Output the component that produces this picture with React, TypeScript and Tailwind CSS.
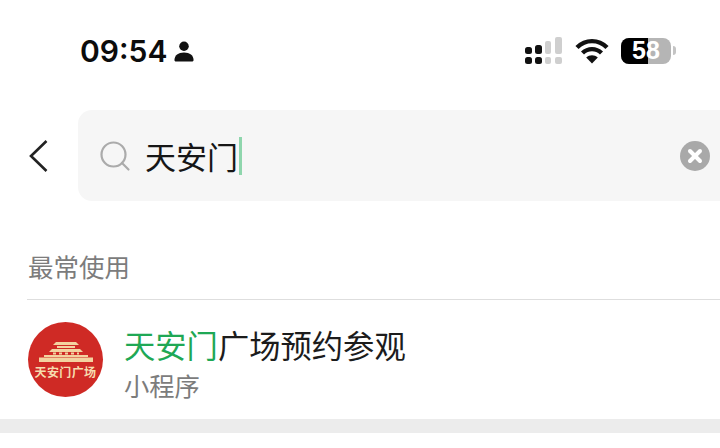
import React from 'react';
import { Search, X } from 'lucide-react';

const cjk = { fontFamily: '"Noto Sans CJK SC", sans-serif' };

const SignalBars = () => (
  <svg width="39" height="27" viewBox="0 0 39 27">
    <rect x="1" y="10" width="7" height="7" rx="2.500" fill="#111" />
    <rect x="11" y="8" width="7" height="9" rx="2.500" fill="#111" />
    <rect x="21" y="4" width="6" height="13" rx="2" fill="#cfcfcf" />
    <rect x="31" y="0" width="7" height="17" rx="2" fill="#cfcfcf" />
    <rect x="1" y="20" width="7" height="7" rx="2.500" fill="#111" />
    <rect x="11" y="20" width="7" height="7" rx="2.500" fill="#111" />
    <rect x="21" y="20" width="6" height="7" rx="2" fill="#cfcfcf" />
    <rect x="31" y="20" width="7" height="7" rx="2" fill="#cfcfcf" />
  </svg>
);

const Wifi = () => (
  <svg width="34" height="26" viewBox="0 0 34 26" fill="none" stroke="#111" strokeWidth="4.400">
    <path d="M2 9.500C10.500 1 23.500 1 32 9.500" />
    <path d="M7.500 15C13 9.800 21 9.800 26.500 15" />
    <path d="M17 25.500L11.200 19.400C14.600 16.400 19.400 16.400 22.800 19.400Z" fill="#111" stroke="none" />
  </svg>
);

const Battery = () => (
  <div className="flex items-center gap-[2px]">
    <div className="relative flex h-[26px] w-[50px] overflow-hidden rounded-[8px] bg-[#b5b5b5]">
      <div className="h-full w-[27px] bg-black" />
      <span className="absolute inset-0 flex items-center justify-center text-[25px] font-bold leading-none text-white [font-family:'Liberation_Sans',sans-serif]">
        58
      </span>
    </div>
    <div className="h-[9px] w-[3px] rounded-r-full bg-[#c4c4c4]" />
  </div>
);

const Person = () => (
  <svg width="20" height="21" viewBox="0 0 20 22" fill="#111">
    <circle cx="10" cy="5.500" r="5" />
    <path d="M0 20c0-5 4-8 10-8s10 3 10 8c0 1-.6 1.600-1.600 1.600H1.600C.6 21.600 0 21 0 20z" />
  </svg>
);

const Logo = () => (
  <div className="flex h-[75px] w-[75px] shrink-0 flex-col items-center justify-center rounded-full bg-[#cf2a25] pt-[2px]">
    <svg width="54" height="20" viewBox="0 0 54 20" fill="#f3d3a0">
      <path d="M17 0h20l3 3H14z" />
      <rect x="18" y="4" width="18" height="2" />
      <path d="M13 7h28l3 3H10z" />
      <path d="M14 10.500h3v2h-3zM20 10.500h3v2h-3zM26 10.500h3v2h-3zM32 10.500h3v2h-3zM38 10.500h2v2h-2z" />
      <path d="M5 13h44v2H5z" />
      <path d="M0 15.500h54V20H0z" />
    </svg>
    <span
      className="mt-[3px] text-[12px] font-bold leading-[14px] tracking-[0.4px] text-[#f6dcae] whitespace-nowrap"
      style={cjk}
    >
      天安门广场
    </span>
  </div>
);

export default function App() {
  return (
    <div className="h-[448px] w-[720px] overflow-hidden bg-white" style={cjk}>
      {/* status bar */}
      <div className="flex h-[110px] items-start justify-between pl-[80px] pr-[44px] pt-[34px]">
        <div className="flex items-center gap-[7px]">
          <span className="text-[30px] font-semibold leading-[34px] text-[#0c0c0c] [font-family:Inter,sans-serif]">
            09:54
          </span>
          <Person />
        </div>
        <div className="flex items-center gap-[12px] pt-[3px]">
          <SignalBars />
          <Wifi />
          <Battery />
        </div>
      </div>

      {/* search */}
      <div className="flex h-[91px] items-center">
        <div className="flex w-[78px] shrink-0 justify-center">
          <svg width="20" height="34" viewBox="0 0 20 34" fill="none" stroke="#222" strokeWidth="2.600" className="mr-[2px]">
            <path d="M18.500 2L3 17l15.500 15" />
          </svg>
        </div>
        <div className="flex h-full flex-1 items-center rounded-l-[14px] bg-[#f6f6f6] pl-[19px] pr-[10px]">
          <Search size={36} strokeWidth={2.2} absoluteStrokeWidth className="shrink-0 text-[#ababab]" />
          <span className="ml-[12px] text-[31px] leading-none text-[#161616]">天安门</span>
          <div className="ml-[1px] h-[38px] w-[3px] bg-[#8fd6ad]" />
          <div className="ml-auto flex h-[30px] w-[30px] items-center justify-center rounded-full bg-[#a9a9a9]">
            <X size={20} strokeWidth={4} absoluteStrokeWidth className="text-white" />
          </div>
        </div>
      </div>

      {/* results */}
      <div className="pl-[27px] pt-[48px]">
        <div className="h-[51px] border-b border-[#dedede] pl-[1px] text-[25.500px] leading-[34px] text-[#7c7c7c]">
          最常使用
        </div>
        <div className="flex h-[119px] items-center gap-[21px] pl-[1px]">
          <Logo />
          <div className="flex flex-col pt-[6px]">
            <div className="text-[31.300px] leading-[44px] text-[#1c1c1c]">
              <span className="text-[#1fa855]">天安门</span>广场预约参观
            </div>
            <div className="text-[25.300px] leading-[36px] text-[#7c7c7c]">小程序</div>
          </div>
        </div>
      </div>

      {/* section divider */}
      <div className="h-[14px] bg-[#ececec]" />
    </div>
  );
}
